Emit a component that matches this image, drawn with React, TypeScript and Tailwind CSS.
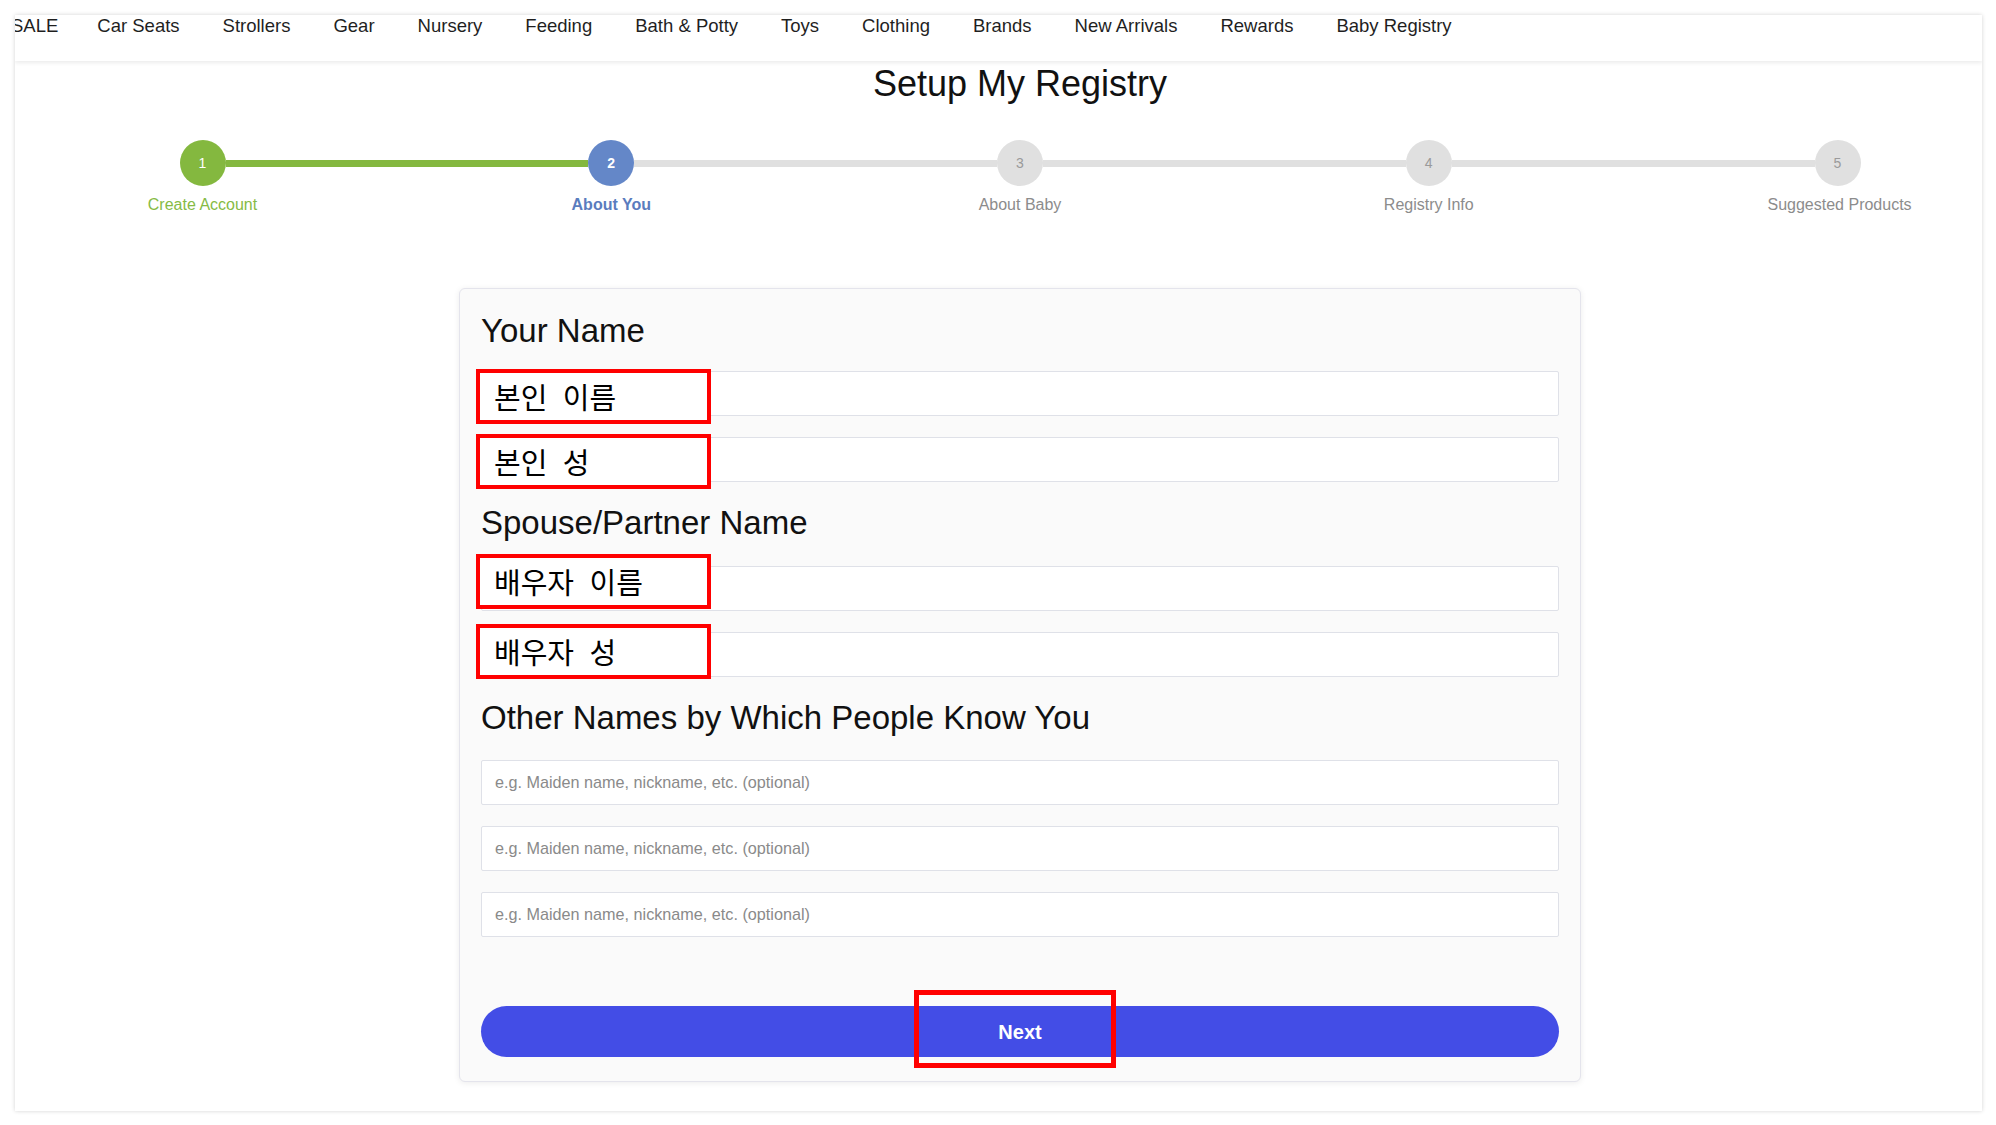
import React from 'react';

const navItems = [
  'SALE',
  'Car Seats',
  'Strollers',
  'Gear',
  'Nursery',
  'Feeding',
  'Bath & Potty',
  'Toys',
  'Clothing',
  'Brands',
  'New Arrivals',
  'Rewards',
  'Baby Registry',
];

const steps = [
  { n: 1, label: 'Create Account', state: 'done' },
  { n: 2, label: 'About You', state: 'active' },
  { n: 3, label: 'About Baby', state: 'todo' },
  { n: 4, label: 'Registry Info', state: 'todo' },
  { n: 5, label: 'Suggested Products', state: 'todo' },
];

const sans = { fontFamily: '"Liberation Sans", Arial, sans-serif' };

// red annotation box laid over the left end of an input
const Callout: React.FC<{ text: string; top: string }> = ({ text, top }) => (
  <div
    className={`absolute left-[-5px] ${top} w-[235px] h-[55px] border-[4px] border-[#ff0000] bg-white flex items-center pl-[14px] text-[29px] text-black [word-spacing:9px]`}
    style={{ fontFamily: '"Noto Sans CJK KR", "Liberation Sans", sans-serif' }}
  >
    {text}
  </div>
);

const Field: React.FC<{ placeholder?: string; callout?: string; calloutTop?: string }> = ({
  placeholder,
  callout,
  calloutTop,
}) => (
  <div className="relative">
    <input
      type="text"
      placeholder={placeholder}
      className="w-full h-[45px] bg-white border border-[#dfe1e8] rounded-[2px] px-[13px] text-[16.2px] text-[#333] placeholder:text-[#8a8a8a] outline-none"
      style={sans}
    />
    {callout && <Callout text={callout} top={calloutTop || 'top-[-2px]'} />}
  </div>
);

const Stepper: React.FC = () => (
  <div>
    <div className="w-[1681px] mx-auto flex items-center">
      {steps.map((s, i) => (
        <React.Fragment key={s.n}>
          {i > 0 && (
            <div className={`flex-1 h-[7px] ${i <= 1 ? 'bg-[#84b83f]' : 'bg-[#e0e0e0]'}`} />
          )}
          <div
            className={`w-[46px] h-[46px] rounded-full flex items-center justify-center text-[14px] ${
              s.state === 'done'
                ? 'bg-[#84b83f] text-white'
                : s.state === 'active'
                ? 'bg-[#6487c8] text-white font-bold'
                : 'bg-[#e0e0e0] text-[#9a9a9a]'
            }`}
          >
            {s.n}
          </div>
        </React.Fragment>
      ))}
    </div>
    <div className="w-[1775px] mx-auto flex justify-between mt-[9px]">
      {steps.map((s) => (
        <div
          key={s.n}
          className={`w-[140px] text-center text-[16px] leading-[20px] whitespace-nowrap ${
            s.state === 'done'
              ? 'text-[#86bb45]'
              : s.state === 'active'
              ? 'text-[#5a7cbe] font-bold'
              : 'text-[#8c8c8c]'
          }`}
        >
          {s.label}
        </div>
      ))}
    </div>
  </div>
);

const App: React.FC = () => {
  return (
    <div className="w-[1996px] h-[1125px] bg-white pl-[15px] pt-[15px] overflow-hidden" style={sans}>
      <div className="w-[1967px] h-[1096px] bg-white shadow-[0_0_4px_rgba(0,0,0,0.18)] overflow-hidden flex flex-col">
        {/* Top nav */}
        <nav className="h-[46px] shrink-0 bg-white shadow-[0_2px_4px_rgba(0,0,0,0.08)] overflow-hidden relative z-10">
          <ul className="flex gap-[43px] ml-[-4px] text-[18.5px] leading-[22px] text-[#1f1f1f] whitespace-nowrap">
            {navItems.map((item, i) => (
              <li key={item} className={i === 0 ? 'mr-[-4px]' : ''}>
                <a href="#">{item}</a>
              </li>
            ))}
          </ul>
        </nav>

        {/* Main */}
        <main className="pl-[43px] flex-1">
          <h1 className="text-center text-[36px] leading-[40px] text-[#111] mt-[3px]">Setup My Registry</h1>

          <div className="mt-[36px]">
            <Stepper />
          </div>

          {/* Form card */}
          <div className="w-[1122px] mx-auto mt-[73px] bg-[#fafafa] border border-[#e4e4ec] rounded-[6px] shadow-[0_1px_6px_rgba(0,0,0,0.08)] px-[21px] pt-[23px] pb-[24px]">
            <h2 className="text-[33px] leading-[38px] text-[#111]">Your Name</h2>
            <div className="mt-[21px] flex flex-col gap-[21px]">
              <Field callout="본인 이름" calloutTop="top-[-2px]" />
              <Field callout="본인 성" calloutTop="top-[-3px]" />
            </div>

            <h2 className="text-[33px] leading-[38px] text-[#111] mt-[22px]">Spouse/Partner Name</h2>
            <div className="mt-[24px] flex flex-col gap-[21px]">
              <Field callout="배우자 이름" calloutTop="top-[-12px]" />
              <Field callout="배우자 성" calloutTop="top-[-8px]" />
            </div>

            <h2 className="text-[33px] leading-[38px] text-[#111] mt-[22px]">
              Other Names by Which People Know You
            </h2>
            <div className="mt-[23px] flex flex-col gap-[21px]">
              <Field placeholder="e.g. Maiden name, nickname, etc. (optional)" />
              <Field placeholder="e.g. Maiden name, nickname, etc. (optional)" />
              <Field placeholder="e.g. Maiden name, nickname, etc. (optional)" />
            </div>

            <div className="relative mt-[69px]">
              <button
                type="button"
                className="w-full h-[51px] rounded-full bg-[#434de6] text-white text-[20px] font-bold"
              >
                Next
              </button>
              <div className="absolute left-[433px] top-[-16px] w-[202px] h-[78px] border-[5px] border-[#ff0000] pointer-events-none" />
            </div>
          </div>
        </main>
      </div>
    </div>
  );
};

export default App;
